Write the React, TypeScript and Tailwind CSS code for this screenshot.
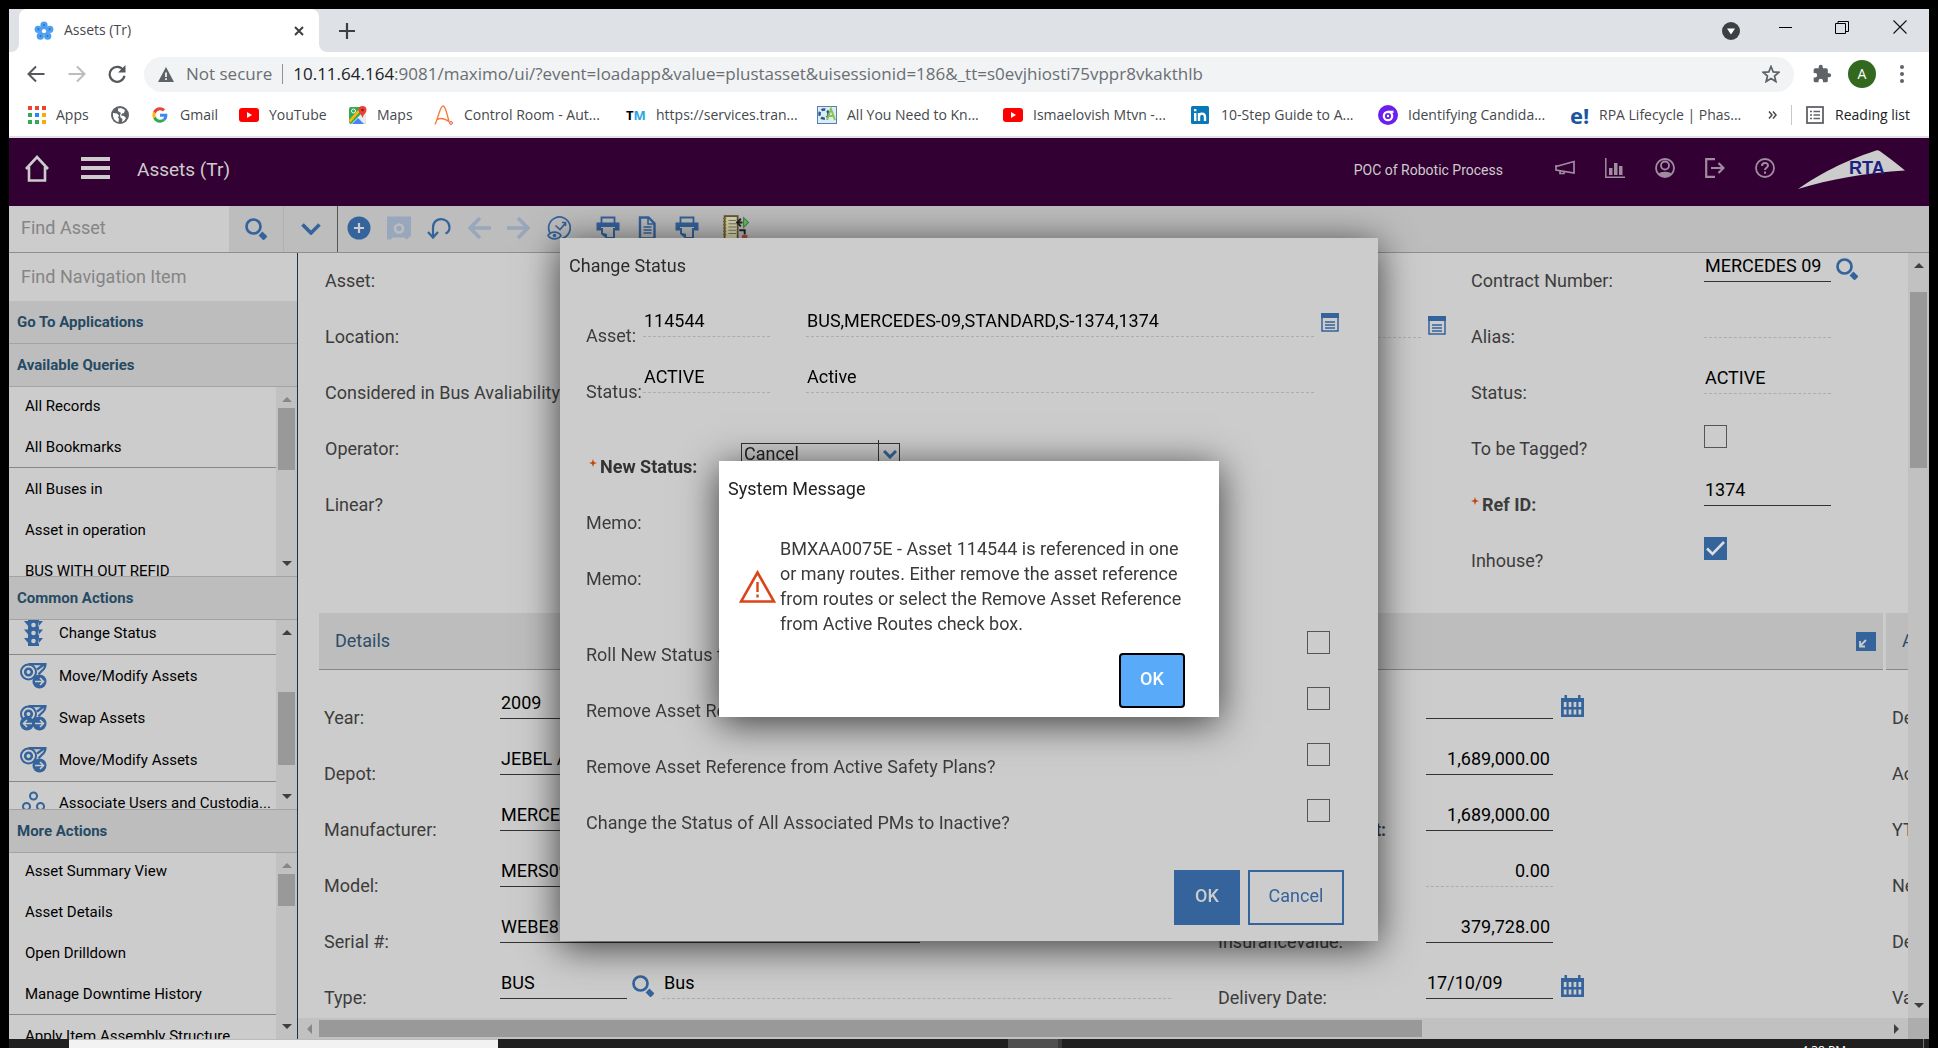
import React, { useId } from "react";

type SvgProps = { className?: string; children?: React.ReactNode; box?: string };

function Svg({ className, children, box = "0 0 24 24" }: SvgProps) {
  return (
    <svg viewBox={box} className={className} fill="none" aria-hidden="true">
      {children}
    </svg>
  );
}

/* ---------- browser chrome ---------- */

function Favicon() {
  return (
    <Svg className="h-5 w-5" box="0 0 20 20">
      <g fill="#4d9ff0">
        <circle cx="10" cy="4.2" r="3.6" />
        <circle cx="15.8" cy="8.3" r="3.6" />
        <circle cx="13.7" cy="15.2" r="3.6" />
        <circle cx="6.3" cy="15.2" r="3.6" />
        <circle cx="4.2" cy="8.3" r="3.6" />
        <circle cx="10" cy="10" r="4" />
      </g>
      <circle cx="10" cy="10.2" r="2.1" fill="#fff" />
      <g fill="#2b74c4">
        <circle cx="10" cy="4" r="1" />
        <circle cx="15.6" cy="8.3" r="1" />
        <circle cx="13.5" cy="15" r="1" />
        <circle cx="6.5" cy="15" r="1" />
        <circle cx="4.4" cy="8.3" r="1" />
      </g>
    </Svg>
  );
}

function TabStrip() {
  return (
    <div className="flex h-[43px] shrink-0 bg-[#dee1e6]">
      <div className="w-[10px] bg-white">
        <div className="h-full rounded-br-lg bg-[#dee1e6]" />
      </div>
      <div className="flex w-[300px] items-center rounded-t-lg bg-white pl-[15px] pr-[10px] text-[#45494d]">
        <Favicon />
        <span className="ml-[10px] flex-1 pb-[2px] text-sm">Assets (Tr)</span>
        <button aria-label="Close tab" className="flex h-5 w-5 items-center justify-center">
          <Svg className="h-[10px] w-[10px]" box="0 0 10 10">
            <path d="M1 1l8 8M9 1L1 9" stroke="#3c4043" strokeWidth="2" />
          </Svg>
        </button>
      </div>
      <div className="w-[10px] bg-white">
        <div className="h-full rounded-bl-lg bg-[#dee1e6]" />
      </div>
      <button aria-label="New tab" className="ml-2 flex w-5 items-center justify-center">
        <Svg className="h-4 w-4" box="0 0 16 16">
          <path d="M8 0v16M0 8h16" stroke="#3c4043" strokeWidth="2.2" />
        </Svg>
      </button>
      <div className="ml-auto flex items-start pr-[22px] pt-[9px]">
        <button aria-label="Search tabs" className="mr-[39px] mt-1">
          <Svg className="h-[18px] w-[18px]" box="0 0 18 18">
            <circle cx="9" cy="9" r="9" fill="#3c4043" />
            <path d="M5 6.5h8L9 12.5z" fill="#fff" />
          </Svg>
        </button>
        <button aria-label="Minimize" className="mr-[43px]">
          <Svg className="h-[18px] w-[13px]" box="0 0 13 18">
            <path d="M0 9.5h13" stroke="#000" />
          </Svg>
        </button>
        <button aria-label="Restore" className="mr-11">
          <Svg className="h-[18px] w-[14px]" box="0 0 14 18">
            <path d="M.5 5.500h10v10H.5zM3 5.500V3.500h10.500v10H11" stroke="#000" />
          </Svg>
        </button>
        <button aria-label="Close window">
          <Svg className="h-[18px] w-[14px]" box="0 0 14 18">
            <path d="M.5 2.500l13 13M13.500 2.500l-13 13" stroke="#111" strokeWidth="1.100" />
          </Svg>
        </button>
      </div>
    </div>
  );
}

function AddressRow() {
  return (
    <div className="flex h-[44px] shrink-0 items-center bg-white pl-[18px] pr-5">
      <button aria-label="Back" className="mr-[23px]">
        <Svg className="h-[18px] w-[18px]" box="0 0 18 18">
          <path d="M17.500 9H2M9 1.500L1.500 9 9 16.500" stroke="#55585c" strokeWidth="2" />
        </Svg>
      </button>
      <button aria-label="Forward" className="mr-[22px]">
        <Svg className="h-[18px] w-[18px]" box="0 0 18 18">
          <path d="M.5 9H16M9 1.500L16.500 9 9 16.500" stroke="#babcbe" strokeWidth="2" />
        </Svg>
      </button>
      <button aria-label="Reload" className="mr-[18px]">
        <Svg className="h-[18px] w-[18px]" box="0 0 18 18">
          <path d="M15.300 5A7.500 7.500 0 1 0 16.500 10.800" stroke="#55585c" strokeWidth="2.200" />
          <path d="M17.500 0v7.500H10z" fill="#55585c" />
        </Svg>
      </button>
      <div className="flex h-[35px] flex-1 items-center rounded-full bg-[#f1f3f4] pl-[14px] pr-[14px] text-[17px] text-[#6a6e73]">
        <Svg className="mr-3 h-[15px] w-4" box="0 0 16 15">
          <path d="M8 0l8 15H0z" fill="#5f6368" />
          <path d="M8 5.500v4.500M8 11.300v1.800" stroke="#f1f3f4" strokeWidth="1.800" />
        </Svg>
        <span>Not secure</span>
        <span className="mx-[10px] h-5 w-px bg-[#8f9296]" />
        <span className="flex-1 truncate">
          <span className="text-[#202124]">10.11.64.164</span>
          :9081/maximo/ui/?event=loadapp&amp;value=plustasset&amp;uisessionid=186&amp;_tt=s0evjhiosti75vppr8vkakthlb
        </span>
        <button aria-label="Bookmark this page">
          <Svg className="h-[18px] w-[18px]">
            <path
              d="M12 2l2.900 7.100 7.600.6-5.800 5 1.800 7.400-6.500-4-6.500 4 1.800-7.400-5.800-5 7.600-.6z"
              stroke="#5f6368"
              strokeWidth="2.300"
            />
          </Svg>
        </button>
      </div>
      <button aria-label="Extensions" className="ml-[18px]">
        <Svg className="h-5 w-5">
          <path
            d="M20.500 11H19V7a2 2 0 0 0-2-2h-4V3.500a2.500 2.500 0 0 0-5 0V5H4a2 2 0 0 0-2 2v3.800h1.500a2.700 2.700 0 0 1 0 5.400H2V20a2 2 0 0 0 2 2h3.800v-1.500a2.700 2.700 0 0 1 5.400 0V22H17a2 2 0 0 0 2-2v-4h1.500a2.500 2.500 0 0 0 0-5z"
            fill="#5f6368"
          />
        </Svg>
      </button>
      <button className="ml-4 flex h-7 w-7 items-center justify-center rounded-full bg-[#33691e] text-sm text-white">
        A
      </button>
      <button aria-label="Menu" className="ml-6 mr-[5px] flex flex-col gap-[3px]">
        <span className="h-1 w-1 rounded-full bg-[#5f6368]" />
        <span className="h-1 w-1 rounded-full bg-[#5f6368]" />
        <span className="h-1 w-1 rounded-full bg-[#5f6368]" />
      </button>
    </div>
  );
}

const YouTubeMark = () => (
  <Svg className="h-[14px] w-5" box="0 0 20 14">
    <rect width="20" height="14" rx="3" fill="#f00" />
    <path d="M8 4l5 3-5 3z" fill="#fff" />
  </Svg>
);

const bookmarks: { text?: string; width: string; gap?: string; icon: React.ReactNode }[] = [
  {
    text: "Apps",
    width: "w-[83px]",
    gap: "gap-[10px]",
    icon: (
      <Svg className="h-[18px] w-[18px]" box="0 0 18 18">
        <path d="M0 0h4v4H0zM7 0h4v4H7zM14 0h4v4h-4z" fill="#ea4335" />
        <path d="M0 7h4v4H0zM0 14h4v4H0zM7 14h4v4H7z" fill="#34a853" />
        <path d="M7 7h4v4H7z" fill="#1a8cff" />
        <path d="M14 7h4v4h-4zM14 14h4v4h-4z" fill="#fbab05" />
      </Svg>
    ),
  },
  {
    width: "w-[41px]",
    icon: (
      <Svg className="h-[18px] w-[18px]" box="0 0 18 18">
        <circle cx="9" cy="9" r="9" fill="#5f6368" />
        <path d="M2 7l4 .5 2 2-1 2 1 1.500-.5 3C4 15.500 2 12 2 9zM7 2.500l3-.5 4 2-1 3-2 .5-1 2 3 .5 2 2-2 3-2 1 .5-3-2-1.500-.5-2.500 1-2L7 5z" fill="#fff" />
      </Svg>
    ),
  },
  {
    text: "Gmail",
    width: "w-[87px]",
    gap: "gap-3",
    icon: (
      <Svg className="h-4 w-4" box="0 0 48 48">
        <path d="M46 24.500c0-1.600-.1-3-.4-4.500H24v9h12.400c-.6 3-2.200 5.300-4.600 6.900l7.200 5.600C43.400 37.500 46 31.600 46 24.500z" fill="#4285f4" />
        <path d="M24 47c6 0 11.400-2 15-5.500l-7.200-5.600C29.800 37.200 27.200 38 24 38c-6 0-11-4-12.800-9.500l-7.500 5.800C7.400 42 15 47 24 47z" fill="#34a853" />
        <path d="M11.200 28.500a13.800 13.800 0 0 1 0-9L3.700 13.700a23 23 0 0 0 0 20.600z" fill="#fbbc05" />
        <path d="M24 10c3.400 0 6.400 1.200 8.800 3.400l6.500-6.500C35.300 3.200 30 1 24 1 15 1 7.400 6 3.700 13.700l7.500 5.800C13 14 18 10 24 10z" fill="#ea4335" />
      </Svg>
    ),
  },
  { text: "YouTube", width: "w-[110px]", gap: "gap-[10px]", icon: <YouTubeMark /> },
  {
    text: "Maps",
    width: "w-[85px]",
    gap: "gap-[10px]",
    icon: (
      <Svg className="h-[18px] w-[18px]" box="0 0 18 18">
        <rect y="1" width="17" height="17" rx="2" fill="#34a853" />
        <path d="M2 18L17 3v13a2 2 0 0 1-2 2z" fill="#e8eaed" />
        <path d="M3 18l6-6 6 6z" fill="#4285f4" />
        <path d="M0 14L12 1h3L1 17z" fill="#fbbc05" />
        <path d="M13.500 0a4 4 0 0 1 4 4c0 3-3 4-4 8-1-4-4-5-4-8a4 4 0 0 1 4-4z" fill="#ea4335" />
        <circle cx="13.500" cy="4" r="1.300" fill="#8c1c13" />
        <circle cx="4.500" cy="5" r="2" stroke="#fff" />
      </Svg>
    ),
  },
  {
    text: "Control Room - Aut...",
    width: "w-[192px]",
    gap: "gap-[10px]",
    icon: (
      <Svg className="h-5 w-5" box="0 0 20 20">
        <path d="M1 19.500C4 14 6 1 9 1c3 0 4 10 6 15M3 14.500c4-2 8-1 12.500 2.500" stroke="#f47b3c" strokeWidth="1.400" />
        <circle cx="17" cy="18" r="1.400" stroke="#f04e3e" />
      </Svg>
    ),
  },
  {
    text: "https://services.tran...",
    width: "w-[191px]",
    gap: "gap-[10px]",
    icon: (
      <span className="w-5 text-[13px] font-bold">
        <span className="text-black">T</span>
        <span className="text-[#2aa7df]">M</span>
      </span>
    ),
  },
  {
    text: "All You Need to Kn...",
    width: "w-[186px]",
    gap: "gap-[10px]",
    icon: (
      <Svg className="h-[18px] w-5" box="0 0 20 18">
        <rect x=".5" y=".5" width="19" height="17" fill="#dcecf4" stroke="#5b7fae" />
        <circle cx="7" cy="8" r="4.500" stroke="#2a5a8c" strokeWidth="2.500" strokeDasharray="4 2" />
        <path d="M10 14l4-11 4 11M12 10h5" stroke="#8cc152" strokeWidth="2" />
      </Svg>
    ),
  },
  { text: "Ismaelovish Mtvn -...", width: "w-[188px]", gap: "gap-[10px]", icon: <YouTubeMark /> },
  {
    text: "10-Step Guide to A...",
    width: "w-[187px]",
    gap: "gap-3",
    icon: (
      <Svg className="h-[18px] w-[18px]" box="0 0 18 18">
        <rect width="18" height="18" rx="1.500" fill="#0a77b7" />
        <path d="M4.200 7v8M4.200 3v2.200M8 15V7M8 11c0-4.500 6-4.500 6 0v4" stroke="#fff" strokeWidth="2.400" />
      </Svg>
    ),
  },
  {
    text: "Identifying Candida...",
    width: "w-[192px]",
    gap: "gap-[10px]",
    icon: (
      <Svg className="h-5 w-5" box="0 0 20 20">
        <circle cx="10" cy="10" r="10" fill="#6a1ff0" />
        <circle cx="10" cy="11" r="4.200" stroke="#fff" strokeWidth="2.200" />
        <path d="M10 6.800h5.500" stroke="#fff" strokeWidth="2.200" />
        <circle cx="10" cy="11" r="1.200" fill="#fff" />
      </Svg>
    ),
  },
  {
    text: "RPA Lifecycle | Phas...",
    width: "w-[188px]",
    gap: "gap-[9px]",
    icon: <span className="w-5 text-[22px] font-bold leading-5 text-[#1a56a0]">e!</span>,
  },
];

function BookmarkBar() {
  return (
    <div className="flex h-[42px] shrink-0 items-center border-b-2 border-[#dfe1e5] bg-white px-[19px] pb-[2px] text-sm text-[#45494d]">
      {bookmarks.map((b, i) => (
        <a
          key={i}
          href="#"
          aria-label={b.text ?? "Saved page"}
          className={`flex shrink-0 items-center whitespace-nowrap ${b.width} ${b.gap ?? ""}`}
        >
          {b.icon}
          {b.text && <span>{b.text}</span>}
        </a>
      ))}
      <button aria-label="More bookmarks" className="ml-auto">
        <Svg className="h-2 w-[9px]" box="0 0 9 8">
          <path d="M1 .5L4 4 1 7.500M5 .5L8 4 5 7.500" stroke="#45494d" strokeWidth="1.500" />
        </Svg>
      </button>
      <span className="mx-[14px] h-5 w-px bg-[#c6c9cc]" />
      <button className="flex items-center gap-[11px] whitespace-nowrap text-[#202124]">
        <Svg className="h-[18px] w-[18px]" box="0 0 18 18">
          <rect x="1" y="1" width="16" height="16" stroke="#5f6368" strokeWidth="1.800" />
          <path d="M4 5.500h2M7.500 5.500H14M4 9h2M7.500 9H14M4 12.500h2M7.500 12.500H14" stroke="#5f6368" strokeWidth="1.600" />
        </Svg>
        Reading list
      </button>
    </div>
  );
}

/* ---------- application header ---------- */

function AppHeader() {
  return (
    <header className="flex h-[68px] shrink-0 items-center bg-[#330033] pb-2 pl-4 pr-[23px] text-[#cccccc]">
      <button aria-label="Home">
        <Svg className="h-[27px] w-6" box="0 0 24 27">
          <path d="M1 14L12 2l11 12M4 12v13.500h16V12" stroke="#cccccc" strokeWidth="2.600" />
        </Svg>
      </button>
      <button aria-label="Go to menu" className="ml-8 flex flex-col gap-[5px]">
        <span className="h-1 w-[29px] bg-[#cccccc]" />
        <span className="h-1 w-[29px] bg-[#cccccc]" />
        <span className="h-1 w-[29px] bg-[#cccccc]" />
      </button>
      <h1 className="ml-[27px] flex-1 pt-1 text-[19px]">Assets (Tr)</h1>
      <span className="mr-[52px] pt-1 text-sm">POC of Robotic Process</span>
      <nav className="flex items-center gap-[30px]">
        <button aria-label="Bulletins">
          <Svg className="h-5 w-5" box="0 0 20 20">
            <path d="M1 7v5l18 3V3.500L1 8.500M5 12.500v3h4v-2" stroke="#a08ca0" strokeWidth="1.700" />
          </Svg>
        </button>
        <button aria-label="Reports">
          <Svg className="h-5 w-5" box="0 0 20 20">
            <path d="M.8 0v19.200H20" stroke="#a08ca0" strokeWidth="1.500" />
            <path d="M4 10h3.500v7H4zM9 5h3.500v12H9zM14 8h3.500v9H14z" fill="#a08ca0" />
          </Svg>
        </button>
        <button aria-label="Profile">
          <Svg className="h-5 w-5" box="0 0 20 20">
            <circle cx="10" cy="10" r="9" stroke="#a08ca0" strokeWidth="1.800" />
            <circle cx="10" cy="7.500" r="4" stroke="#a08ca0" strokeWidth="1.800" />
            <path d="M3.500 16c1.500-3 11.500-3 13 0A9 9 0 0 1 10 19a9 9 0 0 1-6.500-3z" fill="#a08ca0" />
          </Svg>
        </button>
        <button aria-label="Sign out">
          <Svg className="h-5 w-5" box="0 0 20 20">
            <path d="M10 1.200H1.200v17.600H10M6 10h12M13.500 5l5 5-5 5" stroke="#a08ca0" strokeWidth="2.200" />
          </Svg>
        </button>
        <button aria-label="Help">
          <Svg className="h-5 w-5" box="0 0 20 20">
            <circle cx="10" cy="10" r="9" stroke="#a08ca0" strokeWidth="1.800" />
            <path d="M7 8c0-4 6-4 6-.5 0 2.200-3 2.200-3 4.500M10 13.500v2.200" stroke="#a08ca0" strokeWidth="2" />
          </Svg>
        </button>
      </nav>
      <svg viewBox="0 0 108 40" className="ml-[23px] mt-1 h-10 w-[108px]" aria-label="RTA" role="img">
        <path d="M0 39C22 24 44 12 78 0.500q2-.5 4 .8C90 7 99 14 107 20.500 68 23 32 29 0 39z" fill="#cccccc" />
        <text x="51" y="24" fontFamily="Liberation Sans" fontWeight="700" fontSize="18" fill="#1b2283">
          RTA
        </text>
      </svg>
    </header>
  );
}

/* ---------- shared application icons ---------- */

const SearchIcon = () => (
  <Svg className="h-[22px] w-[22px]" box="0 0 22 22">
    <circle cx="8.500" cy="8.500" r="7" stroke="#35639c" strokeWidth="2.700" />
    <path d="M15.500 15.500l5 5" stroke="#35639c" strokeWidth="5.500" />
  </Svg>
);

const LongDescIcon = () => (
  <Svg className="h-[19px] w-[18px]" box="0 0 18 19">
    <rect x="1" y="1" width="16" height="17" stroke="#35639c" strokeWidth="1.500" />
    <path d="M0 0h18v5H0z" fill="#35639c" />
    <path d="M4 9h10M4 12h10M4 15h10" stroke="#35639c" strokeWidth="1.500" />
  </Svg>
);

const CalendarIcon = () => (
  <Svg className="h-[22px] w-[23px]" box="0 0 23 22">
    <path d="M0 3h23v19H0zM3.500 0h2.500v4H3.500zM17 0h2.500v4H17z" fill="#35639c" />
    <path
      d="M2.800 7h2.700v5H2.800zM7.700 7h2.700v5H7.700zM12.600 7h2.700v5h-2.700zM17.500 7h2.700v5h-2.700zM2.800 14.500h2.700v5H2.800zM7.700 14.500h2.700v5H7.700zM12.600 14.500h2.700v5h-2.700zM17.500 14.500h2.700v5h-2.700z"
      fill="#cccccc"
    />
  </Svg>
);

const RequiredMark = () => (
  <Svg className="mb-2 mr-[3px] h-2 w-2 shrink-0" box="0 0 8 8">
    <path d="M4 0l1 3 3 1-3 1-1 3-1-3-3-1 3-1z" fill="#c4450c" />
  </Svg>
);

const PrintIcon = () => (
  <Svg className="h-6 w-6">
    <path d="M5.500 7V1.500h13V7" stroke="#35639c" strokeWidth="1.800" />
    <path d="M.5 6.500h23v8H19v-3.500H5v3.500H.5z" fill="#35639c" />
    <path d="M18 12v10h-7.500" stroke="#35639c" strokeWidth="2" />
    <path d="M5 12h2v5l4 1v5L5 18z" fill="#35639c" />
  </Svg>
);

const tools: { label: string; gap: string; icon: React.ReactNode }[] = [
  {
    label: "New Asset",
    gap: "ml-[9px]",
    icon: (
      <Svg className="h-6 w-6">
        <circle cx="12" cy="12" r="11.500" fill="#35639c" />
        <path d="M12 7v10M7 12h10" stroke="#cccccc" strokeWidth="2.200" />
      </Svg>
    ),
  },
  {
    label: "Save Asset",
    gap: "ml-4",
    icon: (
      <Svg className="h-6 w-6">
        <path d="M0 .5h24v19l-4 4-3-2H5l-1 2H0z" fill="#98a7bb" />
        <circle cx="12" cy="12.500" r="4" stroke="#bdbdbd" strokeWidth="2.500" />
      </Svg>
    ),
  },
  {
    label: "Clear Changes",
    gap: "ml-4",
    icon: (
      <Svg className="h-6 w-6">
        <path d="M6 21V11.500C6 0 22.500.500 22.500 11.500c0 3-1.500 5-4 6M1 16l5 5.500 5-5.500" stroke="#35639c" strokeWidth="2.200" />
      </Svg>
    ),
  },
  {
    label: "Previous Record",
    gap: "ml-4",
    icon: (
      <Svg className="h-6 w-6">
        <path d="M24 12H3M13 2L3 12l10 10" stroke="#98a7bb" strokeWidth="3.400" />
      </Svg>
    ),
  },
  {
    label: "Next Record",
    gap: "ml-4",
    icon: (
      <Svg className="h-6 w-6">
        <path d="M0 12h21M11 2l10 10-10 10" stroke="#98a7bb" strokeWidth="3.400" />
      </Svg>
    ),
  },
  {
    label: "Change Status",
    gap: "ml-4",
    icon: (
      <Svg className="h-6 w-6">
        <path d="M3 17A10.800 10.800 0 1 1 15 22.300" stroke="#35639c" strokeWidth="1.700" />
        <path d="M8.500 9.500l4.500 4 6-7M18.500 10V6.500H15" stroke="#35639c" strokeWidth="1.600" />
        <path d="M1 19.500c3-4.500 10-4.500 13 0-3 4.500-10 4.500-13 0z" stroke="#35639c" strokeWidth="1.600" />
        <circle cx="7.500" cy="19.500" r="1.800" fill="#35639c" />
      </Svg>
    ),
  },
  { label: "Print", gap: "ml-[25px]", icon: <PrintIcon /> },
  {
    label: "Report",
    gap: "ml-[15px]",
    icon: (
      <Svg className="h-6 w-6">
        <path d="M5 1.500h8.500l6 6v15H5z" stroke="#35639c" strokeWidth="2.400" />
        <path d="M13 1v7h7M8.500 11h8M8.500 14h8M8.500 17h8" stroke="#35639c" strokeWidth="1.600" />
      </Svg>
    ),
  },
  { label: "Print Report", gap: "ml-4", icon: <PrintIcon /> },
  {
    label: "Work Log",
    gap: "ml-6",
    icon: (
      <Svg className="h-[26px] w-[26px]">
        <rect x="1.500" y="1" width="12" height="22" fill="#d8d6a8" stroke="#5c5330" strokeWidth="1.600" />
        <path d="M0 3h3M0 6h3M0 9h3M0 12h3M0 15h3M0 18h3" stroke="#8a6a30" strokeWidth="1.300" />
        <path d="M5 5h7M5 8h7M5 11h7M5 14h7M5 17h7" stroke="#777" />
        <path d="M13 7h5M16.500 3.500L13 7l3.500 3.500M20 18v-4h-5" stroke="#222" strokeWidth="1.800" />
        <path d="M19 2.500l4.500 4.500L19 11.500z" fill="#6fc06a" stroke="#3f8a3a" />
        <path d="M17.500 18.500h5v5h-5z" fill="#b94a48" />
      </Svg>
    ),
  },
];

function Toolbar() {
  return (
    <div className="flex h-[47px] shrink-0 border-b border-[#8f8f8f] bg-[#bdbdbd]">
      <input
        aria-label="Find Asset"
        placeholder="Find Asset"
        className="w-[220px] bg-[#cccccc] pb-[2px] pl-3 text-lg text-black outline-none placeholder:text-[#858585]"
      />
      <button aria-label="Search" className="flex w-[55px] items-center justify-center border-r border-[#b0b0b0]">
        <SearchIcon />
      </button>
      <button aria-label="Search options" className="flex w-[54px] items-center justify-center border-r border-[#555]">
        <Svg className="h-3 w-5" box="0 0 20 12">
          <path d="M1.500 1.500L10 10l8.500-8.500" stroke="#35639c" strokeWidth="3.600" />
        </Svg>
      </button>
      {tools.map((t) => (
        <button key={t.label} aria-label={t.label} className={`pb-[2px] ${t.gap}`}>
          {t.icon}
        </button>
      ))}
    </div>
  );
}

/* ---------- scroll bars ---------- */

function Arrow({ dir, color }: { dir: "up" | "down" | "left" | "right"; color: string }) {
  const d = {
    up: "M0 8l5-5 5 5z",
    down: "M0 2l5 5 5-5z",
    left: "M8 0L3 5l5 5z",
    right: "M2 0l5 5-5 5z",
  }[dir];
  return (
    <svg viewBox="0 0 10 10" className="h-[10px] w-[10px] shrink-0" aria-hidden="true">
      <path d={d} fill={color} />
    </svg>
  );
}

function VScroll({ top, thumb, upColor = "#878787" }: { top: string; thumb: string; upColor?: string }) {
  return (
    <div className="flex w-[21px] shrink-0 flex-col items-center bg-[#c1c1c1] py-[7px]">
      <Arrow dir="up" color={upColor} />
      <div className={`w-[17px] shrink-0 bg-[#999999] ${top} ${thumb}`} />
      <div className="flex-1" />
      <Arrow dir="down" color="#3f3f3f" />
    </div>
  );
}

/* ---------- navigation pane ---------- */

function NavHeading({ children }: { children: React.ReactNode }) {
  return (
    <h2 className="flex h-[43px] shrink-0 items-center border-b border-[#a3a3a3] bg-[#bdbdbd] pl-2 text-[15px] font-bold text-[#264a64]">
      {children}
    </h2>
  );
}

function NavItem({ children, divider, icon }: { children: React.ReactNode; divider?: boolean; icon?: React.ReactNode }) {
  return (
    <li className={divider ? "border-b border-[#888888]" : ""}>
      <a
        href="#"
        className={`flex items-center whitespace-nowrap text-[15px] text-black ${icon ? "h-[42px] gap-3 pl-[11px]" : "h-10 pl-4"}`}
      >
        {icon}
        <span>{children}</span>
      </a>
    </li>
  );
}

const TrafficIcon = () => (
  <Svg className="h-[26px] w-[27px] shrink-0" box="0 0 27 26">
    <path d="M8 0h11v26H8zM4 1h4l1 6zM23 1h-4l-1 6zM4 9.500h4l1 6zM23 9.500h-4l-1 6zM4 18h4l1 6zM23 18h-4l-1 6z" fill="#35639c" />
    <g fill="#cccccc">
      <circle cx="13.500" cy="5" r="2.300" />
      <circle cx="13.500" cy="13" r="2.300" />
      <circle cx="13.500" cy="21" r="2.300" />
    </g>
  </Svg>
);

const MoveIcon = ({ swap }: { swap?: boolean }) => (
  <Svg className="h-[26px] w-[27px] shrink-0" box="0 0 27 26">
    <circle cx="8.500" cy="9" r="7.500" stroke="#35639c" strokeWidth="2" />
    <circle cx="8.500" cy="9" r="3.300" stroke="#35639c" strokeWidth="2.600" />
    <path d="M8.500 1.200H25.500c0 3.500-1.500 5-4 7l-3 3M17 6.500l7-5" stroke="#35639c" strokeWidth="2.200" />
    {swap && (
      <>
        <circle cx="7" cy="18.500" r="7" fill="#35639c" />
        <path d="M12 18.500H3.500M7 15l-3.500 3.500L7 22" stroke="#cccccc" strokeWidth="1.600" />
      </>
    )}
    <circle cx="19.500" cy="18.500" r="7" fill="#35639c" />
    <path d="M15 18.500h8.500M20 15l3.500 3.500L20 22" stroke="#cccccc" strokeWidth="1.600" />
  </Svg>
);

const UsersIcon = () => (
  <Svg className="h-[26px] w-[27px] shrink-0" box="0 0 27 26">
    <g stroke="#35639c" strokeWidth="2">
      <circle cx="13.500" cy="6" r="3.500" />
      <circle cx="6.500" cy="16.500" r="3.500" />
      <circle cx="20.500" cy="16.500" r="3.500" />
    </g>
  </Svg>
);

function Sidebar() {
  return (
    <aside className="flex w-[289px] shrink-0 flex-col border-r border-[#1b3346] bg-[#cccccc]">
      <input
        aria-label="Find Navigation Item"
        placeholder="Find Navigation Item"
        className="h-[48px] shrink-0 bg-[#cccccc] pb-[2px] pl-3 text-lg outline-none placeholder:text-[#858585]"
      />
      <NavHeading>Go To Applications</NavHeading>
      <NavHeading>Available Queries</NavHeading>
      <div className="flex h-[190px] shrink-0 border-b border-[#a3a3a3]">
        <ul className="-mt-px min-w-0 flex-1 space-y-px overflow-hidden">
          <NavItem>All Records</NavItem>
          <NavItem divider>All Bookmarks</NavItem>
          <NavItem>All Buses in</NavItem>
          <NavItem>Asset in operation</NavItem>
          <NavItem>BUS WITH OUT REFID</NavItem>
        </ul>
        <VScroll top="mt-1" thumb="h-[62px]" />
      </div>
      <NavHeading>Common Actions</NavHeading>
      <div className="flex h-[190px] shrink-0 border-b border-[#a3a3a3]">
        <ul className="-mt-2 min-w-0 flex-1 overflow-hidden">
          <NavItem divider icon={<TrafficIcon />}>Change Status</NavItem>
          <NavItem icon={<MoveIcon />}>Move/Modify Assets</NavItem>
          <NavItem icon={<MoveIcon swap />}>Swap Assets</NavItem>
          <NavItem divider icon={<MoveIcon />}>Move/Modify Assets</NavItem>
          <NavItem icon={<UsersIcon />}>Associate Users and Custodia...</NavItem>
        </ul>
        <VScroll top="mt-[55px]" thumb="h-[73px]" upColor="#3f3f3f" />
      </div>
      <NavHeading>More Actions</NavHeading>
      <div className="flex min-h-0 flex-1">
        <ul className="-mt-[2px] min-w-0 flex-1 space-y-px overflow-hidden">
          <NavItem>Asset Summary View</NavItem>
          <NavItem>Asset Details</NavItem>
          <NavItem>Open Drilldown</NavItem>
          <NavItem divider>Manage Downtime History</NavItem>
          <NavItem>Apply Item Assembly Structure</NavItem>
        </ul>
        <VScroll top="mt-1" thumb="h-8" />
      </div>
    </aside>
  );
}

/* ---------- form parts ---------- */

const LINE = {
  solid: "border-b border-[#333333]",
  dashed: "border-b border-dashed border-[#adadad]",
};

type FieldProps = {
  label?: string;
  name?: string;
  labelWidth?: string;
  value?: string;
  line?: "solid" | "dashed";
  width?: string;
  bold?: boolean;
  required?: boolean;
  right?: boolean;
  check?: boolean;
  checked?: boolean;
  labelOnly?: boolean;
  children?: React.ReactNode;
};

function CheckBox({ id, checked }: { id: string; checked?: boolean }) {
  return (
    <span className="relative mt-1 h-[23px] w-[23px] shrink-0">
      <input
        id={id}
        type="checkbox"
        defaultChecked={checked}
        className="block h-[23px] w-[23px] appearance-none border border-[#555555] checked:border-[#35639c] checked:bg-[#35639c]"
      />
      {checked && (
        <Svg className="pointer-events-none absolute inset-0 h-[23px] w-[23px]" box="0 0 23 23">
          <path d="M3 11.500l5.500 5.500L20 5" stroke="#dddddd" strokeWidth="2.600" />
        </Svg>
      )}
    </span>
  );
}

function Field({
  label,
  name,
  labelWidth = "w-[176px]",
  value = "",
  line = "solid",
  width = "w-[127px]",
  bold,
  required,
  right,
  check,
  checked,
  labelOnly,
  children,
}: FieldProps) {
  const id = useId();
  return (
    <div className="flex h-14 text-lg">
      <label
        htmlFor={labelOnly ? undefined : id}
        className={`flex shrink-0 items-center whitespace-nowrap text-[#3c3c3c] ${labelWidth} ${bold ? "font-bold" : ""}`}
      >
        {required && <RequiredMark />}
        {label}
      </label>
      {check && <CheckBox id={id} checked={checked} />}
      {!check && !labelOnly && (
        <input
          id={id}
          aria-label={label ? undefined : name}
          defaultValue={value}
          className={`h-[29px] shrink-0 bg-transparent pb-1 text-black outline-none ${width} ${LINE[line]} ${right ? "pr-[3px] text-right" : "pl-px"}`}
        />
      )}
      {children}
    </div>
  );
}

function MainForm() {
  const L = "w-[233px]";
  const M = "w-[208px]";
  return (
    <main className="flex min-w-0 flex-1 flex-col bg-[#cccccc]">
      <div className="flex min-h-0 flex-1">
        <div className="min-w-0 flex-1 overflow-hidden">
          <section className="flex pl-[27px]">
            <div className="flex-1">
              <Field label="Asset:" labelOnly />
              <Field label="Location:" labelWidth="w-[500px]" name="Location" line="dashed" width="flex-1">
                <button aria-label="Long description" className="mb-6 ml-[7px] mr-[25px]">
                  <LongDescIcon />
                </button>
              </Field>
              <Field label="Considered in Bus Avaliability:" labelOnly />
              <Field label="Operator:" labelOnly />
              <Field label="Linear?" labelOnly />
            </div>
            <div className="w-[437px] shrink-0">
              <Field label="Contract Number:" labelWidth={L} value="MERCEDES 09">
                <button aria-label="Look up contract" className="mb-6 ml-[5px]">
                  <SearchIcon />
                </button>
              </Field>
              <Field label="Alias:" labelWidth={L} line="dashed" />
              <Field label="Status:" labelWidth={L} line="dashed" value="ACTIVE" />
              <Field label="To be Tagged?" labelWidth={L} check />
              <Field label="Ref ID:" labelWidth={L} bold required value="1374" />
              <Field label="Inhouse?" labelWidth={L} check checked />
            </div>
          </section>

          <div className="mt-6 flex gap-[3px] pl-[21px] text-lg text-[#2d4d68]">
            <h2 className="flex h-[57px] flex-1 items-center justify-between border-b border-[#888888] bg-[#bdbdbd] pl-4 pr-[7px]">
              Details
              <button aria-label="Minimize section">
                <Svg className="h-[19px] w-5" box="0 0 20 19">
                  <path d="M0 0h20v19H0z" fill="#35639c" />
                  <path d="M10 8l-6 6M4 9v5.500h5" stroke="#cccccc" strokeWidth="1.800" />
                </Svg>
              </button>
            </h2>
            <h2 className="flex w-[22px] items-center overflow-hidden whitespace-nowrap border-b border-[#888888] bg-[#bdbdbd] pl-4">
              A
            </h2>
          </div>

          <section className="mt-5 flex pl-[26px]">
            <div className="flex-1">
              <Field label="Year:" value="2009" />
              <Field label="Depot:" value="JEBEL ALI" />
              <Field label="Manufacturer:" value="MERCEDES" />
              <Field label="Model:" value="MERS09" />
              <Field label="Serial #:" value="WEBE8" width="w-[420px]" />
              <Field label="Type:" value="BUS">
                <button aria-label="Look up type" className="mb-6 ml-[5px]">
                  <SearchIcon />
                </button>
                <input
                  aria-label="Type description"
                  defaultValue="Bus"
                  className="ml-2 mr-[47px] h-[29px] flex-1 border-b border-dashed border-[#adadad] bg-transparent pb-1 pl-[2px] text-black outline-none"
                />
              </Field>
            </div>
            <div className="w-[674px] shrink-0">
              <Field name="Installation date" labelWidth={M}>
                <button aria-label="Pick installation date" className="mb-6 ml-2">
                  <CalendarIcon />
                </button>
              </Field>
              <Field name="Purchase price" labelWidth={M} value="1,689,000.00" right />
              <Field label="Replacement Cost:" required bold labelWidth="w-[208px] pl-1" value="1,689,000.00" right />
              <Field name="Total cost" labelWidth={M} value="0.00" line="dashed" right />
              <Field label="Insurancevalue:" labelWidth={M} value="379,728.00" right />
              <Field label="Delivery Date:" labelWidth={M} value="17/10/09">
                <button aria-label="Pick delivery date" className="mb-6 ml-2">
                  <CalendarIcon />
                </button>
              </Field>
            </div>
            <div className="w-4 shrink-0 overflow-hidden">
              {["De", "Ac", "YT", "Ne", "De", "Va"].map((t, i) => (
                <Field key={i} label={t} labelOnly />
              ))}
            </div>
          </section>
        </div>
        <VScroll top="mt-[22px]" thumb="h-[176px]" upColor="#3f3f3f" />
      </div>
      <div className="flex h-[21px] shrink-0 bg-[#c1c1c1]">
        <div className="flex flex-1 items-center px-[6px]">
          <Arrow dir="left" color="#878787" />
          <div className="ml-[5px] h-[17px] w-[69%] bg-[#999999]" />
          <div className="flex-1" />
          <Arrow dir="right" color="#3f3f3f" />
        </div>
        <div className="w-[21px] bg-[#adadad]" />
      </div>
    </main>
  );
}

/* ---------- dialogs ---------- */

const SHADOW = "shadow-[0_6px_36px_rgba(0,0,0,0.7)]";

function ChangeStatusDialog() {
  const id = useId();
  return (
    <div className="fixed inset-0 flex items-start justify-center pt-[238px]">
      <div
        role="dialog"
        aria-label="Change Status"
        className={`w-[818px] bg-[#cccccc] pb-4 pl-[26px] pr-[34px] text-lg ${SHADOW}`}
      >
        <h2 className="-ml-[17px] flex h-14 items-center text-[#2b2b2b]">Change Status</h2>
        <div className="mt-[14px]">
          <Field label="Asset:" labelWidth="w-[57px]" line="dashed" value="114544">
            <input
              aria-label="Asset description"
              defaultValue="BUS,MERCEDES-09,STANDARD,S-1374,1374"
              className="ml-9 h-[29px] flex-1 border-b border-dashed border-[#adadad] bg-transparent pb-1 pl-px text-black outline-none"
            />
            <button aria-label="Long description" className="mb-7 ml-[7px] mr-[5px]">
              <LongDescIcon />
            </button>
          </Field>
          <Field label="Status:" labelWidth="w-[57px]" line="dashed" value="ACTIVE">
            <input
              aria-label="Status description"
              defaultValue="Active"
              className="ml-9 mr-[30px] h-[29px] flex-1 border-b border-dashed border-[#adadad] bg-transparent pb-1 pl-px text-black outline-none"
            />
          </Field>
        </div>
        <div className="mt-[19px] flex h-14">
          <label htmlFor={id} className="flex w-[155px] items-center pl-[3px] font-bold text-[#333333]">
            <RequiredMark />
            New Status:
          </label>
          <span className="relative mt-px h-7 w-[159px]">
            <select
              id={id}
              defaultValue="Cancel"
              className="h-7 w-full appearance-none border border-[#333333] bg-transparent pb-[6px] pl-[2px] text-lg leading-5 text-[#222222]"
            >
              <option>Cancel</option>
            </select>
            <span className="pointer-events-none absolute inset-y-0 right-0 flex w-[22px] items-center justify-center border-l border-[#333333]">
              <Svg className="h-[9px] w-[14px]" box="0 0 14 9">
                <path d="M1 1l6 6 6-6" stroke="#35639c" strokeWidth="3" />
              </Svg>
            </span>
          </span>
        </div>
        <Field label="Memo:" labelWidth="w-[155px]" width="w-[400px]" />
        <Field label="Memo:" labelWidth="w-[155px]" width="w-[400px]" />
        <div className="mr-[14px] mt-5">
          <Field label="Roll New Status to Children?" labelWidth="flex-1" check />
          <Field label="Remove Asset Reference?" labelWidth="flex-1" check />
          <Field label="Remove Asset Reference from Active Safety Plans?" labelWidth="flex-1" check />
          <Field label="Change the Status of All Associated PMs to Inactive?" labelWidth="flex-1" check />
        </div>
        <div className="mt-[19px] flex justify-end gap-2">
          <button className="h-[55px] w-[66px] bg-[#35639c] pb-1 font-medium text-[#cccccc]">OK</button>
          <button className="h-[55px] w-24 border-2 border-[#35639c] pb-1 text-[#35639c]">Cancel</button>
        </div>
      </div>
    </div>
  );
}

function SystemMessage() {
  return (
    <div className="fixed inset-0 flex items-start justify-center pt-[461px]">
      <div role="alertdialog" aria-label="System Message" className={`w-[500px] bg-white pb-[9px] text-lg text-[#3a3a3a] ${SHADOW}`}>
        <h2 className="flex h-14 items-center pl-[9px] text-[#222222]">System Message</h2>
        <div className="mt-[19px] flex items-center gap-1 pl-5">
          <Svg className="h-[33px] w-[37px] shrink-0" box="0 0 37 33">
            <path d="M18.500 2.500L35 31.500H2z" stroke="#dc4418" strokeWidth="2.600" />
            <path d="M18.500 12v10M18.500 24.500v3" stroke="#dc4418" strokeWidth="2.400" />
          </Svg>
          <p className="w-[410px] leading-[25px]">
            BMXAA0075E - Asset 114544 is referenced in one or many routes. Either remove the asset reference from
            routes or select the Remove Asset Reference from Active Routes check box.
          </p>
        </div>
        <div className="mt-[17px] flex justify-end pr-[34px]">
          <button className="h-[55px] w-[66px] rounded border-2 border-black bg-[#5aaafa] pb-1 font-medium text-white">
            OK
          </button>
        </div>
      </div>
    </div>
  );
}

function Taskbar() {
  return (
    <div className="flex h-[9px] shrink-0 overflow-hidden bg-[#202020] text-xs text-white">
      <div className="ml-[60px] w-[429px] border-t border-[#bbbbbb] bg-[#f2f2f2]" />
      <div className="ml-[510px] w-[50px] bg-[#4f4f4f]" />
      <div className="w-1 bg-[#3a3a3a]" />
      <span className="ml-auto mr-[77px] mt-1">4:38 PM</span>
      <div className="mr-[5px] w-px bg-[#777777]" />
    </div>
  );
}

export default function App() {
  return (
    <div className="flex h-screen flex-col overflow-hidden bg-black px-[9px] pt-[9px] font-['Open_Sans',sans-serif]">
      <TabStrip />
      <AddressRow />
      <BookmarkBar />
      <div className="flex min-h-0 flex-1 flex-col font-[Roboto,sans-serif]">
        <AppHeader />
        <Toolbar />
        <div className="flex min-h-0 flex-1">
          <Sidebar />
          <MainForm />
        </div>
        <ChangeStatusDialog />
        <SystemMessage />
      </div>
      <Taskbar />
    </div>
  );
}
